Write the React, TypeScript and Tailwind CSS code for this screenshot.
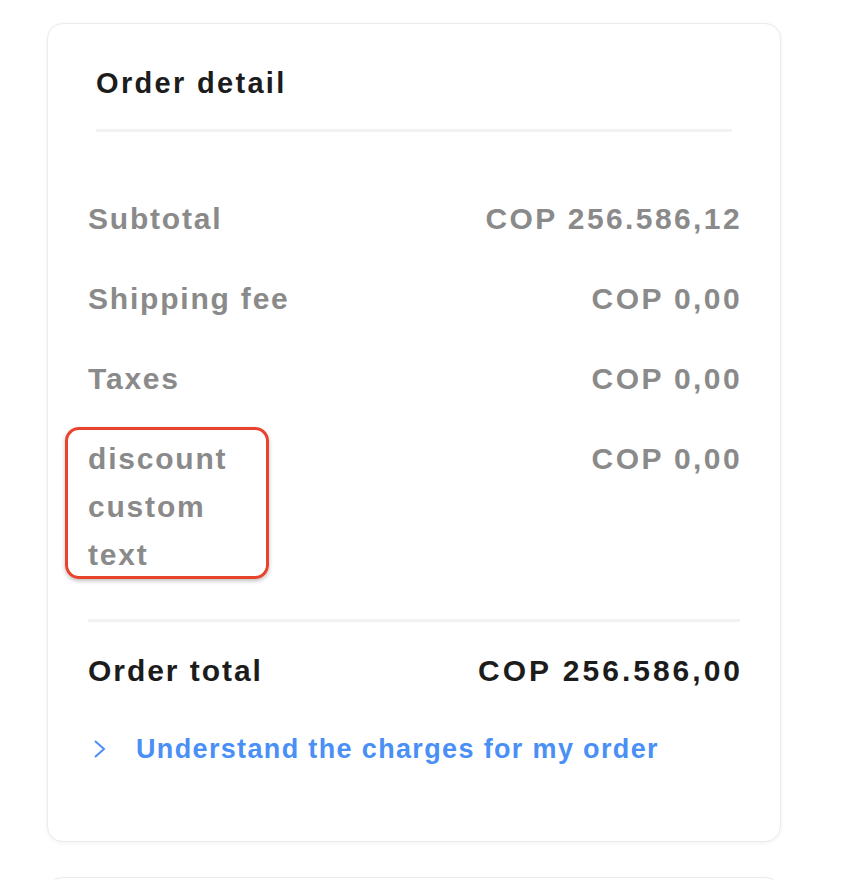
import React from "react";

interface RowProps {
  label: React.ReactNode;
  value: string;
  narrow?: boolean;
}

const Row = ({ label, value, narrow }: RowProps) => (
  <div className="flex justify-between items-start text-[30px] leading-[48px] font-bold text-[#8a8a8a]">
    <div className={narrow ? "relative w-[165px] tracking-[0.06em]" : "relative tracking-[0.06em]"}>
      {label}
      {narrow && (
        <div className="absolute -left-[23px] -top-[8px] w-[204px] h-[152px] rounded-[14px] border-[3px] border-[#e8432d] shadow-[0_2px_4px_rgba(0,0,0,0.25)]" />
      )}
    </div>
    <div className="tracking-[0.08em] -mr-[2px]">{value}</div>
  </div>
);

const App = () => {
  return (
    <div
      className="min-h-screen bg-white overflow-hidden"
      style={{ fontFamily: '"Liberation Sans", Arial, sans-serif' }}
    >
      {/* Order detail card */}
      <div className="ml-[47px] mt-[23px] w-[734px] rounded-[16px] border border-[#ececec] shadow-[0_1px_4px_rgba(0,0,0,0.06)] bg-white">
        {/* Header */}
        <div className="px-[48px] pt-[39px]">
          <h1 className="text-[29px] leading-[40px] font-bold text-[#1c1c1c] tracking-[0.08em]">
            Order detail
          </h1>
          <div className="mt-[26px] h-[3px] bg-[#f2f2f2]" />
        </div>

        {/* Rows */}
        <div className="px-[40px] pt-[63px] pb-[68px]">
          <div className="flex flex-col gap-[32px]">
            <Row label="Subtotal" value="COP 256.586,12" />
            <Row label="Shipping fee" value="COP 0,00" />
            <Row label="Taxes" value="COP 0,00" />
            <Row label="discount custom text" value="COP 0,00" narrow />
          </div>

          <div className="mt-[40px] h-[3px] bg-[#f2f2f2]" />

          <div className="mt-[25px] flex justify-between text-[30px] leading-[48px] font-bold text-[#1c1c1c]">
            <div className="tracking-[0.065em]">Order total</div>
            <div className="tracking-[0.1em] -mr-[3px]">COP 256.586,00</div>
          </div>

          <a
            href="#"
            className="mt-[30px] flex items-center text-[27px] leading-[48px] font-bold text-[#4a8ff5] tracking-[0.05em]"
          >
            <svg
              width="14"
              height="20"
              viewBox="0 0 14 20"
              fill="none"
              stroke="#4a8ff5"
              strokeWidth="2"
              className="ml-[5px] mr-[29px]"
            >
              <path d="M2 2 L11 10 L2 18" />
            </svg>
            Understand the charges for my order
          </a>
        </div>
      </div>

      {/* Next card peeking */}
      <div className="ml-[47px] mt-[35px] w-[734px] h-[120px] rounded-[16px] border border-[#ececec] shadow-[0_1px_4px_rgba(0,0,0,0.06)] bg-white" />
    </div>
  );
};

export default App;
